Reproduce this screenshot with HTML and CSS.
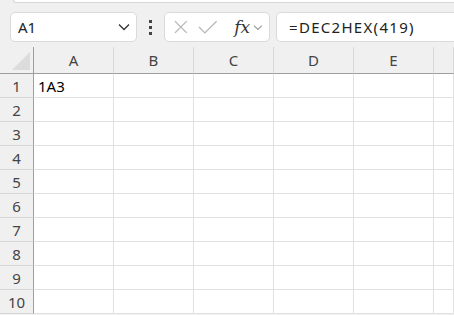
FILE: index.html
```html
<!DOCTYPE html>
<html lang="en">
<head>
    <meta charset="UTF-8">
    <title>DEC2HEX</title>
    <link rel="stylesheet" href="styles.css">
</head>
<body>
    <div class="ribbon-edge"></div>

    <div class="formula-bar">
        <div class="name-box">
            <span>A1</span>
            <svg class="chevron" width="12" height="8" viewBox="0 0 12 8">
                <path d="M1 1.5 L6 6.5 L11 1.5" fill="none" stroke="#333" stroke-width="1.3"/>
            </svg>
        </div>
        <div class="dots"><i></i><i></i><i></i></div>
        <div class="fx-box">
            <svg width="16" height="16" viewBox="0 0 16 16">
                <path d="M2 2 L14 14 M14 2 L2 14" stroke="#b8b8b8" stroke-width="1.4" fill="none"/>
            </svg>
            <svg width="20" height="16" viewBox="0 0 20 16">
                <path d="M1 8 L7 14 L19 2" stroke="#b8b8b8" stroke-width="1.4" fill="none"/>
            </svg>
            <span class="fx">fx</span>
            <svg class="fx-chevron" width="10" height="7" viewBox="0 0 10 7">
                <path d="M1 1.5 L5 5.5 L9 1.5" fill="none" stroke="#999" stroke-width="1.1"/>
            </svg>
        </div>
        <div class="formula">=DEC2HEX(419)</div>
    </div>

    <div class="sheet">
        <div class="corner"><span class="tri"></span></div>
        <div class="col-head">A</div>
        <div class="col-head">B</div>
        <div class="col-head">C</div>
        <div class="col-head">D</div>
        <div class="col-head">E</div>
        <div class="col-head"></div>

        <div class="row-head">1</div><div class="cell">1A3</div><div class="cell"></div><div class="cell"></div><div class="cell"></div><div class="cell"></div><div class="cell"></div>
        <div class="row-head">2</div><div class="cell"></div><div class="cell"></div><div class="cell"></div><div class="cell"></div><div class="cell"></div><div class="cell"></div>
        <div class="row-head">3</div><div class="cell"></div><div class="cell"></div><div class="cell"></div><div class="cell"></div><div class="cell"></div><div class="cell"></div>
        <div class="row-head">4</div><div class="cell"></div><div class="cell"></div><div class="cell"></div><div class="cell"></div><div class="cell"></div><div class="cell"></div>
        <div class="row-head">5</div><div class="cell"></div><div class="cell"></div><div class="cell"></div><div class="cell"></div><div class="cell"></div><div class="cell"></div>
        <div class="row-head">6</div><div class="cell"></div><div class="cell"></div><div class="cell"></div><div class="cell"></div><div class="cell"></div><div class="cell"></div>
        <div class="row-head">7</div><div class="cell"></div><div class="cell"></div><div class="cell"></div><div class="cell"></div><div class="cell"></div><div class="cell"></div>
        <div class="row-head">8</div><div class="cell"></div><div class="cell"></div><div class="cell"></div><div class="cell"></div><div class="cell"></div><div class="cell"></div>
        <div class="row-head">9</div><div class="cell"></div><div class="cell"></div><div class="cell"></div><div class="cell"></div><div class="cell"></div><div class="cell"></div>
        <div class="row-head">10</div><div class="cell"></div><div class="cell"></div><div class="cell"></div><div class="cell"></div><div class="cell"></div><div class="cell"></div>
    </div>
</body>
</html>
```

FILE: styles.css
```css
body {
    margin: 0;
    background-color: #f0f0f0;
    font-family: "Noto Sans", "Open Sans", sans-serif;
    color: #222;
    overflow: hidden;
}
.ribbon-edge {
    height: 2px;
    margin-left: 13px;
    background-color: white;
    border-left: 1px solid #d6d6d6;
    border-bottom: 1px solid #d6d6d6;
    border-bottom-left-radius: 6px;
}
.formula-bar {
    display: flex;
    align-items: center;
    height: 30px;
    padding: 9px 0 5px 10px;
}
.name-box,
.fx-box,
.formula {
    height: 30px;
    box-sizing: border-box;
    background-color: white;
    border: 1px solid #dadada;
    border-radius: 5px;
    display: flex;
    align-items: center;
}
.name-box {
    width: 127px;
    padding: 0 6px 0 7px;
    justify-content: space-between;
    font-size: 15px;
}
.dots {
    width: 27px;
    display: flex;
    flex-direction: column;
    align-items: center;
    gap: 3px;
}
.dots i {
    width: 3px;
    height: 3px;
    background-color: #444;
}
.fx-box {
    width: 106px;
    padding: 0 6px 0 8px;
    gap: 9px;
}
.fx {
    font-family: "DejaVu Serif", "Liberation Serif", serif;
    font-style: italic;
    font-size: 17px;
    color: #333;
    margin-left: 8px;
}
.fx-chevron {
    margin-left: -6px;
}
.formula {
    flex: 1;
    margin-left: 6px;
    padding-left: 12px;
    font-size: 15px;
    letter-spacing: 1.3px;
    border-right: none;
    border-radius: 5px 0 0 5px;
}
.sheet {
    display: grid;
    grid-template-columns: 34px repeat(5, 80px) 1fr;
    grid-auto-rows: 24px;
    grid-template-rows: 27px;
    background-color: white;
    font-size: 15px;
}
.corner,
.col-head,
.row-head {
    background-color: #f0f0f0;
    color: #444;
    box-sizing: border-box;
    display: flex;
    align-items: center;
    justify-content: center;
}
.corner {
    position: relative;
    border-right: 1px solid #9e9e9e;
    border-bottom: 1px solid #9e9e9e;
}
.tri {
    position: absolute;
    right: 3px;
    bottom: 3px;
    width: 0;
    height: 0;
    border-left: 18px solid transparent;
    border-bottom: 18px solid #dcdcdc;
}
.col-head {
    border-right: 1px solid #d8d8d8;
    border-bottom: 1px solid #9e9e9e;
}
.row-head {
    border-right: 1px solid #9e9e9e;
    border-bottom: 1px solid #d8d8d8;
}
.cell {
    box-sizing: border-box;
    border-right: 1px solid #e1e1e1;
    border-bottom: 1px solid #e1e1e1;
    padding: 0 4px;
    display: flex;
    align-items: center;
    color: #000;
}
```
